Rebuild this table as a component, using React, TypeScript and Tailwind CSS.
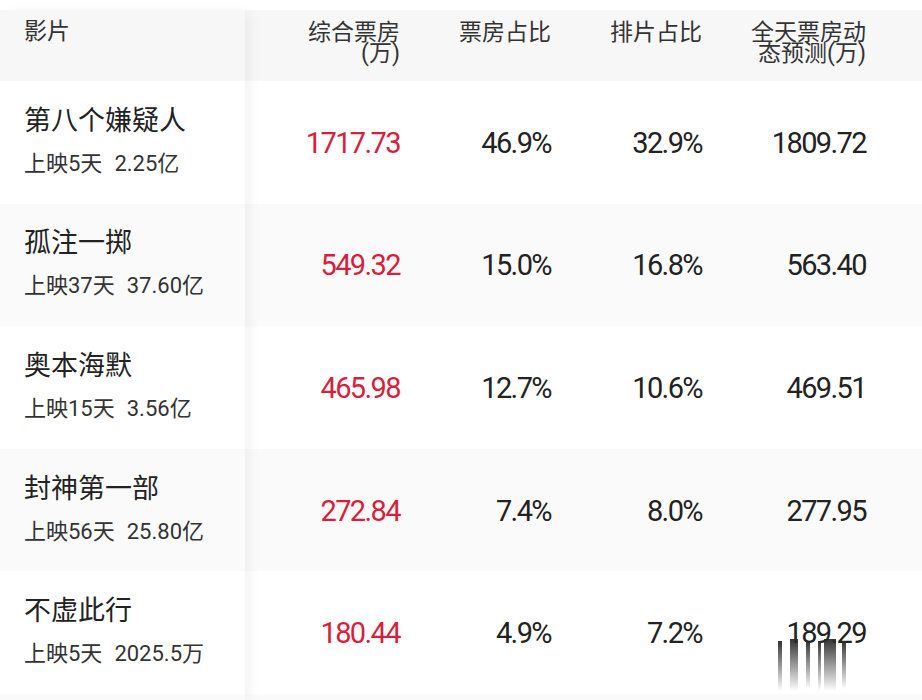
import React from "react";

type Movie = {
  name: string;
  days: string;
  total: string;
  boxOffice: string;
  boxShare: string;
  showShare: string;
  forecast: string;
};

const movies: Movie[] = [
  { name: "第八个嫌疑人", days: "上映5天", total: "2.25亿", boxOffice: "1717.73", boxShare: "46.9%", showShare: "32.9%", forecast: "1809.72" },
  { name: "孤注一掷", days: "上映37天", total: "37.60亿", boxOffice: "549.32", boxShare: "15.0%", showShare: "16.8%", forecast: "563.40" },
  { name: "奥本海默", days: "上映15天", total: "3.56亿", boxOffice: "465.98", boxShare: "12.7%", showShare: "10.6%", forecast: "469.51" },
  { name: "封神第一部", days: "上映56天", total: "25.80亿", boxOffice: "272.84", boxShare: "7.4%", showShare: "8.0%", forecast: "277.95" },
  { name: "不虚此行", days: "上映5天", total: "2025.5万", boxOffice: "180.44", boxShare: "4.9%", showShare: "7.2%", forecast: "189.29" },
];

const rowBg = (i: number) => (i % 2 === 0 ? "bg-white" : "bg-[#fafafa]");

// smudge under the last forecast value in the screenshot
const Smear = () => (
  <svg
    className="pointer-events-none absolute left-[-9px] top-[23px]"
    width="80"
    height="54"
    viewBox="0 0 80 54"
  >
    <defs>
      <linearGradient id="fade" x1="0" y1="0" x2="0" y2="1">
        <stop offset="0" stopColor="#2a2a2a" stopOpacity="0.95" />
        <stop offset="1" stopColor="#2a2a2a" stopOpacity="0" />
      </linearGradient>
    </defs>
    <rect x="1" y="2" width="4" height="50" fill="url(#fade)" />
    <rect x="13" y="0" width="8" height="52" fill="url(#fade)" />
    <rect x="29" y="2" width="4" height="48" fill="url(#fade)" />
    <rect x="41" y="2" width="3" height="50" fill="url(#fade)" />
    <rect x="47" y="0" width="12" height="52" fill="url(#fade)" />
    <rect x="65" y="2" width="4" height="48" fill="url(#fade)" />
  </svg>
);

export default function App() {
  return (
    <div className="h-[700px] overflow-hidden bg-white pt-[10px] font-['Roboto','Noto_Sans_CJK_SC',sans-serif] text-[#222]">
      <div className="flex">
        {/* fixed film column */}
        <div className="relative z-10 w-[245px] shrink-0 shadow-[7px_0_12px_-3px_rgba(0,0,0,0.06)]">
          <div className="h-[71px] bg-[#f7f7f7] pl-[24px] pt-[11px] text-[23px] leading-[22px] text-[#333]">
            影片
          </div>
          {movies.map((m, i) => (
            <div
              key={m.name}
              className={`flex h-[122.6px] flex-col justify-center pb-[2px] pl-[24px] ${rowBg(i)}`}
            >
              <div className="text-[27px] leading-[34px] text-[#222]">{m.name}</div>
              <div className="mt-[11px] flex text-[22px] leading-[30px] text-[#333]">
                <span>{m.days}</span>
                <span className="ml-[12px]">{m.total}</span>
              </div>
            </div>
          ))}
          <div className="h-[10px] bg-[#fafafa]" />
        </div>

        {/* data columns */}
        <div className="flex-1">
          <div className="flex h-[71px] bg-[#f7f7f7] pt-[12px] text-right text-[23px] leading-[21px] text-[#333]">
            <div className="w-[155px]">
              综合票房
              <br />
              (万)
            </div>
            <div className="w-[151px]">票房占比</div>
            <div className="w-[151px]">排片占比</div>
            <div className="w-[164px]">
              全天票房动
              <br />
              态预测(万)
            </div>
          </div>
          {movies.map((m, i) => (
            <div
              key={m.name}
              className={`flex h-[122.6px] items-center pt-[1px] text-right text-[29px] leading-[34px] tracking-[-1.6px] ${rowBg(i)}`}
            >
              <div className="w-[155px] text-[#d81e3c]">{m.boxOffice}</div>
              <div className="w-[151px]">{m.boxShare}</div>
              <div className="w-[151px]">{m.showShare}</div>
              <div className="w-[164px]">
                <span className="relative inline-block">
                  {m.forecast}
                  {i === movies.length - 1 ? <Smear /> : null}
                </span>
              </div>
            </div>
          ))}
          <div className="h-[10px] bg-[#fafafa]" />
        </div>
      </div>
    </div>
  );
}
